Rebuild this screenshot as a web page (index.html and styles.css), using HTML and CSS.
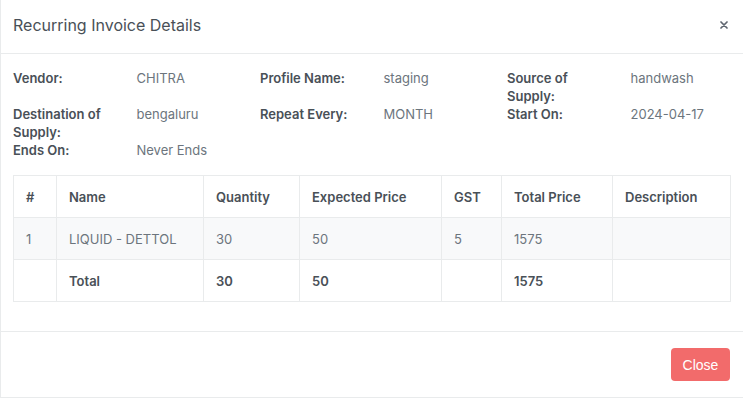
FILE: index.html
```html
<!DOCTYPE html>
<html lang="en">
<head>
    <meta charset="UTF-8">
    <meta name="viewport" content="width=device-width, initial-scale=1.0">
    <title>Recurring Invoice Details</title>
    <link rel="stylesheet" href="styles.css">
</head>
<body>
    <div class="modal">
        <div class="modal-header">
            <h5 class="modal-title">Recurring Invoice Details</h5>
            <button type="button" class="btn-close" aria-label="Close">
                <svg width="8" height="8" viewBox="0 0 8 8">
                    <path d="M1 1L7 7M7 1L1 7" stroke="#5f6670" stroke-width="1.7" stroke-linecap="round"/>
                </svg>
            </button>
        </div>

        <div class="modal-body">
            <div class="details">
                <div class="label">Vendor:</div>
                <div class="value">CHITRA</div>
                <div class="label">Profile Name:</div>
                <div class="value">staging</div>
                <div class="label">Source of Supply:</div>
                <div class="value">handwash</div>

                <div class="label">Destination of Supply:</div>
                <div class="value">bengaluru</div>
                <div class="label">Repeat Every:</div>
                <div class="value">MONTH</div>
                <div class="label">Start On:</div>
                <div class="value">2024-04-17</div>

                <div class="label">Ends On:</div>
                <div class="value">Never Ends</div>
            </div>

            <table class="items">
                <thead>
                    <tr>
                        <th>#</th>
                        <th>Name</th>
                        <th>Quantity</th>
                        <th>Expected Price</th>
                        <th>GST</th>
                        <th>Total Price</th>
                        <th>Description</th>
                    </tr>
                </thead>
                <tbody>
                    <tr class="striped">
                        <td>1</td>
                        <td>LIQUID - DETTOL</td>
                        <td>30</td>
                        <td>50</td>
                        <td>5</td>
                        <td>1575</td>
                        <td></td>
                    </tr>
                    <tr class="total">
                        <td></td>
                        <td>Total</td>
                        <td>30</td>
                        <td>50</td>
                        <td></td>
                        <td>1575</td>
                        <td></td>
                    </tr>
                </tbody>
            </table>
        </div>

        <div class="modal-footer">
            <button type="button" class="btn-danger">Close</button>
        </div>
    </div>
</body>
</html>
```

FILE: styles.css
```css
* {
    margin: 0;
    padding: 0;
    box-sizing: border-box;
}

body {
    background: #fff;
    font-family: 'Inter', 'Noto Sans', sans-serif;
    color: #495057;
    font-size: 13px;
}

.modal {
    width: 743px;
    height: 398px;
    background: #fff;
    border-left: 1px solid #e9ebec;
    border-bottom: 1px solid #e9ebec;
}

.modal-header {
    display: flex;
    align-items: center;
    justify-content: space-between;
    padding: 13px 14px 16px 12px;
    border-bottom: 1px solid #e9ebec;
}

.modal-title {
    font-size: 16px;
    font-weight: 400;
    line-height: 24px;
    color: #495057;
}

.btn-close {
    background: none;
    border: none;
    width: 10px;
    height: 10px;
    display: flex;
    align-items: center;
    justify-content: center;
    margin-top: -1px;
    cursor: pointer;
}

.modal-body {
    padding: 15px 13px 29px 12px;
}

/* Details */
.details {
    display: grid;
    grid-template-columns: repeat(6, 123.5px);
    line-height: 18px;
    margin-bottom: 16px;
}

.details .label {
    font-weight: 600;
    color: #495057;
    padding-right: 12px;
}

.details .value {
    color: #6c757d;
    padding-right: 12px;
}

/* Table */
.items {
    width: 717px;
    border-collapse: collapse;
    table-layout: fixed;
}

.items th,
.items td {
    border: 1px solid #e9ebec;
    padding: 12px 12px 11px;
    line-height: 18px;
    text-align: left;
    vertical-align: middle;
}

.items th {
    font-weight: 600;
    color: #495057;
}

.items td {
    color: #6c757d;
}

.items th:nth-child(1) { width: 43px; }
.items th:nth-child(2) { width: 147px; }
.items th:nth-child(3) { width: 96px; }
.items th:nth-child(4) { width: 142px; }
.items th:nth-child(5) { width: 60px; }
.items th:nth-child(6) { width: 111px; }
.items th:nth-child(7) { width: 118px; }

.items .striped td {
    background: #f8f9fa;
}

.items .total td {
    font-weight: 600;
    color: #495057;
}

/* Footer */
.modal-footer {
    display: flex;
    justify-content: flex-end;
    padding: 16px 13px;
    border-top: 1px solid #e9ebec;
}

.btn-danger {
    background: #f26b6b;
    color: #fff;
    border: none;
    border-radius: 4px;
    height: 33px;
    width: 59px;
    font-family: 'Liberation Sans', Arial, sans-serif;
    font-size: 14px;
    cursor: pointer;
}
```
